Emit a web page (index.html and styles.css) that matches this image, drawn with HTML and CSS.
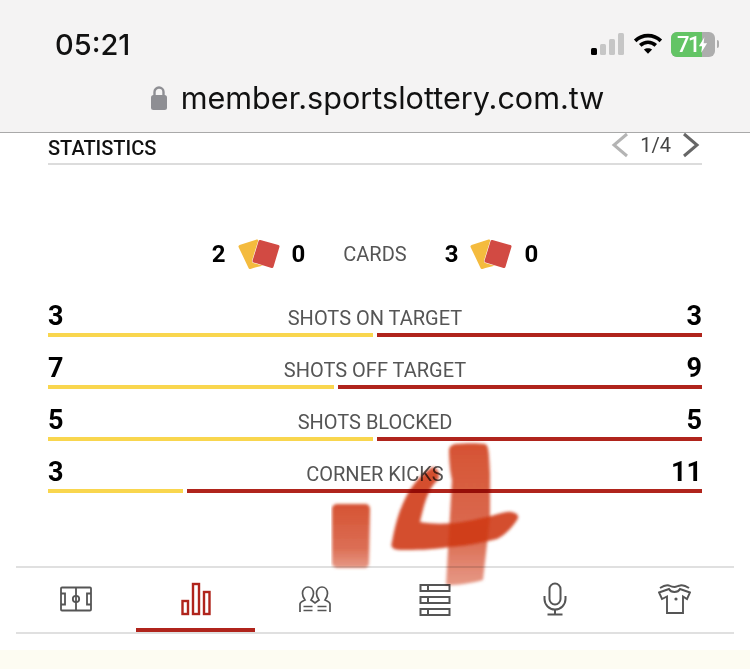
FILE: index.html
```html
<!DOCTYPE html>
<html lang="en">
<head>
    <meta charset="UTF-8">
    <meta name="viewport" content="width=device-width, initial-scale=1.0">
    <title>Statistics</title>
    <link rel="stylesheet" href="styles.css">
</head>
<body>
    <!-- Browser chrome -->
    <header class="chrome">
        <div class="status-bar">
            <span class="time">05:21</span>
            <div class="status-icons">
                <svg class="signal" width="36" height="24" viewBox="0 0 36 24">
                    <rect x="1" y="16" width="6" height="7" rx="1.500" fill="#000"/>
                    <rect x="10" y="12" width="6" height="11" rx="1.500" fill="#c6c6c6"/>
                    <rect x="19" y="7" width="6" height="16" rx="1.500" fill="#c6c6c6"/>
                    <rect x="28" y="1" width="6" height="22" rx="1.500" fill="#c6c6c6"/>
                </svg>
                <svg class="wifi" width="30" height="22" viewBox="0 0 32 24" fill="none" stroke="#000" stroke-width="4">
                    <path d="M2 8.500c8-7.500 20-7.500 28 0"/>
                    <path d="M7.500 13.500c5-4.500 12-4.500 17 0"/>
                    <path d="M16 22.500l-4.500-4.500c2.500-2 6.500-2 9 0z" fill="#000" stroke="none"/>
                </svg>
                <div class="battery">
                    <div class="battery-fill"></div>
                    <span class="battery-text">71</span>
                    <svg class="bolt" width="10" height="18" viewBox="0 0 11 17"><path d="M7 0L1 10h3.500L3.500 17 10 6.500H6.200z" fill="#fff"/></svg>
                </div>
                <span class="battery-cap"></span>
            </div>
        </div>
        <div class="url-bar">
            <svg class="lock" width="18" height="26" viewBox="0 0 18 26">
                <path d="M4.500 11V7a4.500 4.500 0 0 1 9 0v4" fill="none" stroke="#8e8e93" stroke-width="2.400"/>
                <rect x="1" y="10" width="16" height="15" rx="2.500" fill="#8e8e93"/>
            </svg>
            <span class="url">member.sportslottery.com.tw</span>
        </div>
    </header>

    <main class="content">
        <div class="section-head">
            <h2>STATISTICS</h2>
            <div class="pager">
                <svg width="18" height="26" viewBox="0 0 18 26" fill="none" stroke="#b4b4b4" stroke-width="3"><path d="M16 2L3 13l13 11"/></svg>
                <span>1/4</span>
                <svg width="18" height="26" viewBox="0 0 18 26" fill="none" stroke="#666" stroke-width="3"><path d="M2 2l13 11L2 24"/></svg>
            </div>
        </div>

        <div class="cards">
            <div class="card-side">
                <b>2</b>
                <svg width="42" height="30" viewBox="0 0 42 30" stroke-linejoin="round">
                    <path d="M2 7.500L19 2l6 23-10 2.500-3 1z" fill="#f4bb3e" stroke="#f4bb3e" stroke-width="3"/>
                    <path d="M22 2.500l18 5-6 20-18-5.500z" fill="#d24a43" stroke="#fff" stroke-width="4"/>
                    <path d="M22 2.500l18 5-6 20-18-5.500z" fill="#d24a43" stroke="#d24a43" stroke-width="3"/>
                </svg>
                <b>0</b>
            </div>
            <span class="cards-label">CARDS</span>
            <div class="card-side">
                <b>3</b>
                <svg width="42" height="30" viewBox="0 0 42 30" stroke-linejoin="round">
                    <path d="M2 7.500L19 2l6 23-10 2.500-3 1z" fill="#f4bb3e" stroke="#f4bb3e" stroke-width="3"/>
                    <path d="M22 2.500l18 5-6 20-18-5.500z" fill="#d24a43" stroke="#fff" stroke-width="4"/>
                    <path d="M22 2.500l18 5-6 20-18-5.500z" fill="#d24a43" stroke="#d24a43" stroke-width="3"/>
                </svg>
                <b>0</b>
            </div>
        </div>

        <div class="stats">
            <div class="stat">
                <div class="stat-text"><b>3</b><span>SHOTS ON TARGET</span><b>3</b></div>
                <div class="stat-bars"><i class="bar-home" style="width:49.7%"></i><i class="bar-away"></i></div>
            </div>
            <div class="stat">
                <div class="stat-text"><b>7</b><span>SHOTS OFF TARGET</span><b>9</b></div>
                <div class="stat-bars"><i class="bar-home" style="width:43.7%"></i><i class="bar-away"></i></div>
            </div>
            <div class="stat">
                <div class="stat-text"><b>5</b><span>SHOTS BLOCKED</span><b>5</b></div>
                <div class="stat-bars"><i class="bar-home" style="width:49.7%"></i><i class="bar-away"></i></div>
            </div>
            <div class="stat">
                <div class="stat-text"><b>3</b><span>CORNER KICKS</span><b>11</b></div>
                <div class="stat-bars"><i class="bar-home" style="width:20.7%"></i><i class="bar-away"></i></div>
            </div>
        </div>
    </main>

    <!-- Tabs -->
    <nav class="tabs">
        <a class="tab">
            <svg width="34" height="26" viewBox="0 0 34 26"><g fill="none" stroke="#555" stroke-width="1.800">
                <rect x="2" y="1.500" width="30" height="23" rx="1"/>
                <path d="M17 1.500v23"/><circle cx="17" cy="13" r="3.200"/>
                <path d="M2 7.500h4v11H2M32 7.500h-4v11h4"/></g></svg>
        </a>
        <a class="tab active">
            <svg width="32" height="34" viewBox="0 0 32 34"><g fill="none" stroke="#b0241c" stroke-width="2.400">
                <rect x="2.500" y="19" width="5.500" height="13"/>
                <rect x="13" y="2" width="6" height="30"/>
                <rect x="24" y="10" width="5.500" height="22"/></g></svg>
        </a>
        <a class="tab">
            <svg width="32" height="27" viewBox="0 0 32 27"><g fill="none" stroke="#555" stroke-width="1.700">
                <path d="M1 26V18C1 16 3 15.500 6 14 4.500 12 3.500 10 3.500 7.500 3.500 3.500 6 1 9 1 12 1 14.500 3.500 14.500 7.500 14.500 10 13.500 12 12 14L16 17 20 14C18.500 12 17.500 10 17.500 7.500 17.500 3.500 20 1 23 1 26 1 28.500 3.500 28.500 7.500 28.500 10 27.500 12 26 14 29 15.500 31 16 31 18V26"/>
                <path d="M4.500 20.500h9M4.500 24.500h9M18.500 20.500h9M18.500 24.500h9"/></g></svg>
        </a>
        <a class="tab">
            <svg width="32" height="33" viewBox="0 0 32 33"><g fill="none" stroke="#555" stroke-width="2">
                <rect x="1.500" y="2" width="29" height="6"/><path d="M9 2v6"/>
                <rect x="1.500" y="14" width="29" height="6"/><path d="M9 14v6"/>
                <rect x="1.500" y="26" width="29" height="6"/><path d="M9 26v6"/></g></svg>
        </a>
        <a class="tab">
            <svg width="24" height="34" viewBox="0 0 24 34"><g fill="none" stroke="#555" stroke-width="2">
                <rect x="6.500" y="1.500" width="11" height="21" rx="5.500"/>
                <path d="M1.500 14v3a10.500 10.500 0 0 0 21 0v-3M12 27.500V32M4.500 32.500h15"/></g></svg>
        </a>
        <a class="tab">
            <svg width="33" height="30" viewBox="0 0 33 30"><g fill="none" stroke="#555" stroke-width="1.900">
                <path d="M11 5L1 8.500 4 15 9 12.500V29H25V12.500L29 15 32 8.500 22 5C20 9 13 9 11 5Z"/>
                <path d="M2 4C5 2 8 .5 11 1.500 13 2.500 15 3 16.500 3 18 3 20 2 22 1.500 25 .5 28 2 31 4"/></g><circle cx="18" cy="15" r="1.600" fill="#555"/></svg>
        </a>
    </nav>

    <div class="footer-strip"></div>

    <!-- Hand painted number over the page -->
    <svg class="paint" width="200" height="150" viewBox="0 0 200 150">
        <defs>
            <filter id="soft" x="-10%" y="-10%" width="120%" height="120%"><feGaussianBlur stdDeviation="1.800"/></filter>
            <linearGradient id="fade-down" x1="0" y1="0" x2="0" y2="1">
                <stop offset="0" stop-color="#d2431f" stop-opacity=".92"/>
                <stop offset=".7" stop-color="#d44f30" stop-opacity=".82"/>
                <stop offset="1" stop-color="#d96448" stop-opacity=".66"/>
            </linearGradient>
        </defs>
        <g filter="url(#soft)">
            <path d="M1 69c0-3 2-5 6-5h27c3 0 5 2 5 5l-1 54c0 3-2 5-5 5H8c-4 0-7-2-7-5z" fill="url(#fade-down)"/>
            <path d="M118 10c0-3 2-5 6-6 10-1 24-1 30 0 3 1 4 4 5 29v44l-7 63c-10 3-28 6-37 5l6-105c-2-8-3-20-3-30z" fill="url(#fade-down)"/>
            <path d="M102 27C106 28 110 34 107 40 97 48 93 65 89 82 100 84 112 84 122 83 135 82 150 78 160 76 168 74 175 71 180 72 186 73 189 76 186 80 181 88 174 95 166 99 150 103 135 106 119 107 100 110 85 110 69 110 62 110 59 107 61 102 64 85 68 70 76 55 82 44 92 32 102 27Z" fill="#cf3a16" opacity=".9"/>
        </g>
    </svg>
</body>
</html>
```

FILE: styles.css
```css
html, body {
    height: 100%;
}
body {
    position: relative;
    margin: 0;
    padding: 0;
    background-color: #fff;
    color: #000;
    font-family: Roboto, Arial, sans-serif;
    overflow: hidden;
}

/* Browser chrome */
.chrome {
    height: 132px;
    background-color: #f4f3f3;
    border-bottom: 1px solid #a9a9a9;
}
.status-bar {
    display: flex;
    justify-content: space-between;
    align-items: center;
    padding: 28px 31px 0 55px;
    height: 32px;
}
.time {
    font-family: Inter, Arial, sans-serif;
    font-size: 29px;
    font-weight: 500;
    color: #111;
}
.status-icons {
    display: flex;
    align-items: center;
}
.signal {
    margin-right: 7px;
}
.wifi {
    margin-right: 8px;
}
.battery {
    position: relative;
    display: flex;
    align-items: center;
    width: 44px;
    height: 25px;
    border-radius: 6px;
    background-color: #adadad;
    overflow: hidden;
}
.battery-fill {
    position: absolute;
    left: 0;
    top: 0;
    bottom: 0;
    width: 31px;
    background-color: #63c465;
}
.battery-text {
    position: relative;
    margin-left: 6px;
    font-size: 22px;
    font-weight: 500;
    letter-spacing: -1.500px;
    color: #fff;
}
.bolt {
    position: absolute;
    left: 27px;
    top: 4px;
}
.battery-cap {
    width: 2px;
    height: 8px;
    margin-left: 2px;
    border-radius: 0 2px 2px 0;
    background-color: #adadad;
}
.url-bar {
    display: flex;
    justify-content: center;
    align-items: center;
    gap: 13px;
    margin-top: 21px;
    padding-left: 4px;
}
.url {
    font-family: Inter, Arial, sans-serif;
    font-size: 30.600px;
    color: #111;
    line-height: 34px;
}

/* Content */
.content {
    padding: 0 48px;
}
.section-head {
    display: flex;
    justify-content: space-between;
    align-items: center;
    height: 30px;
    border-bottom: 2px solid #dcdcdc;
}
.section-head h2 {
    margin: 0;
    font-size: 20px;
    font-weight: 500;
    color: #111;
}
.pager {
    display: flex;
    align-items: center;
    gap: 11px;
    padding: 0 2px 6px 0;
    font-size: 20px;
    color: #444;
}
.cards {
    display: flex;
    justify-content: center;
    align-items: center;
    gap: 38px;
    margin-top: 72px;
    height: 34px;
}
.cards-label {
    font-size: 20px;
    color: #555;
}
.card-side {
    display: flex;
    align-items: center;
    gap: 12px;
}
.card-side b {
    font-size: 24px;
    font-weight: 700;
}
.stats {
    margin-top: 27px;
}
.stat {
    height: 52px;
}
.stat-text {
    display: flex;
    justify-content: space-between;
    align-items: flex-end;
    height: 35px;
    line-height: 28px;
}
.stat-text b {
    width: 50px;
    margin-bottom: 3px;
    font-size: 27px;
    font-weight: 700;
}
.stat-text b:last-child {
    text-align: right;
}
.stat-text span {
    flex: 1;
    padding-bottom: 3px;
    text-align: center;
    font-size: 20px;
    color: #555;
    line-height: 24px;
}
.stat-bars {
    display: flex;
    gap: 4px;
}
.stat-bars i {
    height: 4px;
}
.bar-home {
    background-color: #f9d64e;
}
.bar-away {
    flex: 1;
    background-color: #b0241c;
}

/* Tabs */
.tabs {
    position: absolute;
    left: 16px;
    right: 16px;
    top: 566px;
    display: flex;
    height: 64px;
    border-top: 2px solid #e0e0e0;
    border-bottom: 2px solid #e0e0e0;
}
.tab {
    flex: 1;
    display: flex;
    justify-content: center;
    align-items: center;
    padding-bottom: 2px;
}
.tab.active {
    height: 58px;
    padding: 2px 0 0;
    border-bottom: 4px solid #b0241c;
}
.footer-strip {
    position: absolute;
    left: 0;
    right: 0;
    top: 650px;
    bottom: 0;
    background-color: #fdfcf2;
}

/* Painted number */
.paint {
    position: absolute;
    left: 331px;
    top: 440px;
    mix-blend-mode: multiply;
    pointer-events: none;
}
```
